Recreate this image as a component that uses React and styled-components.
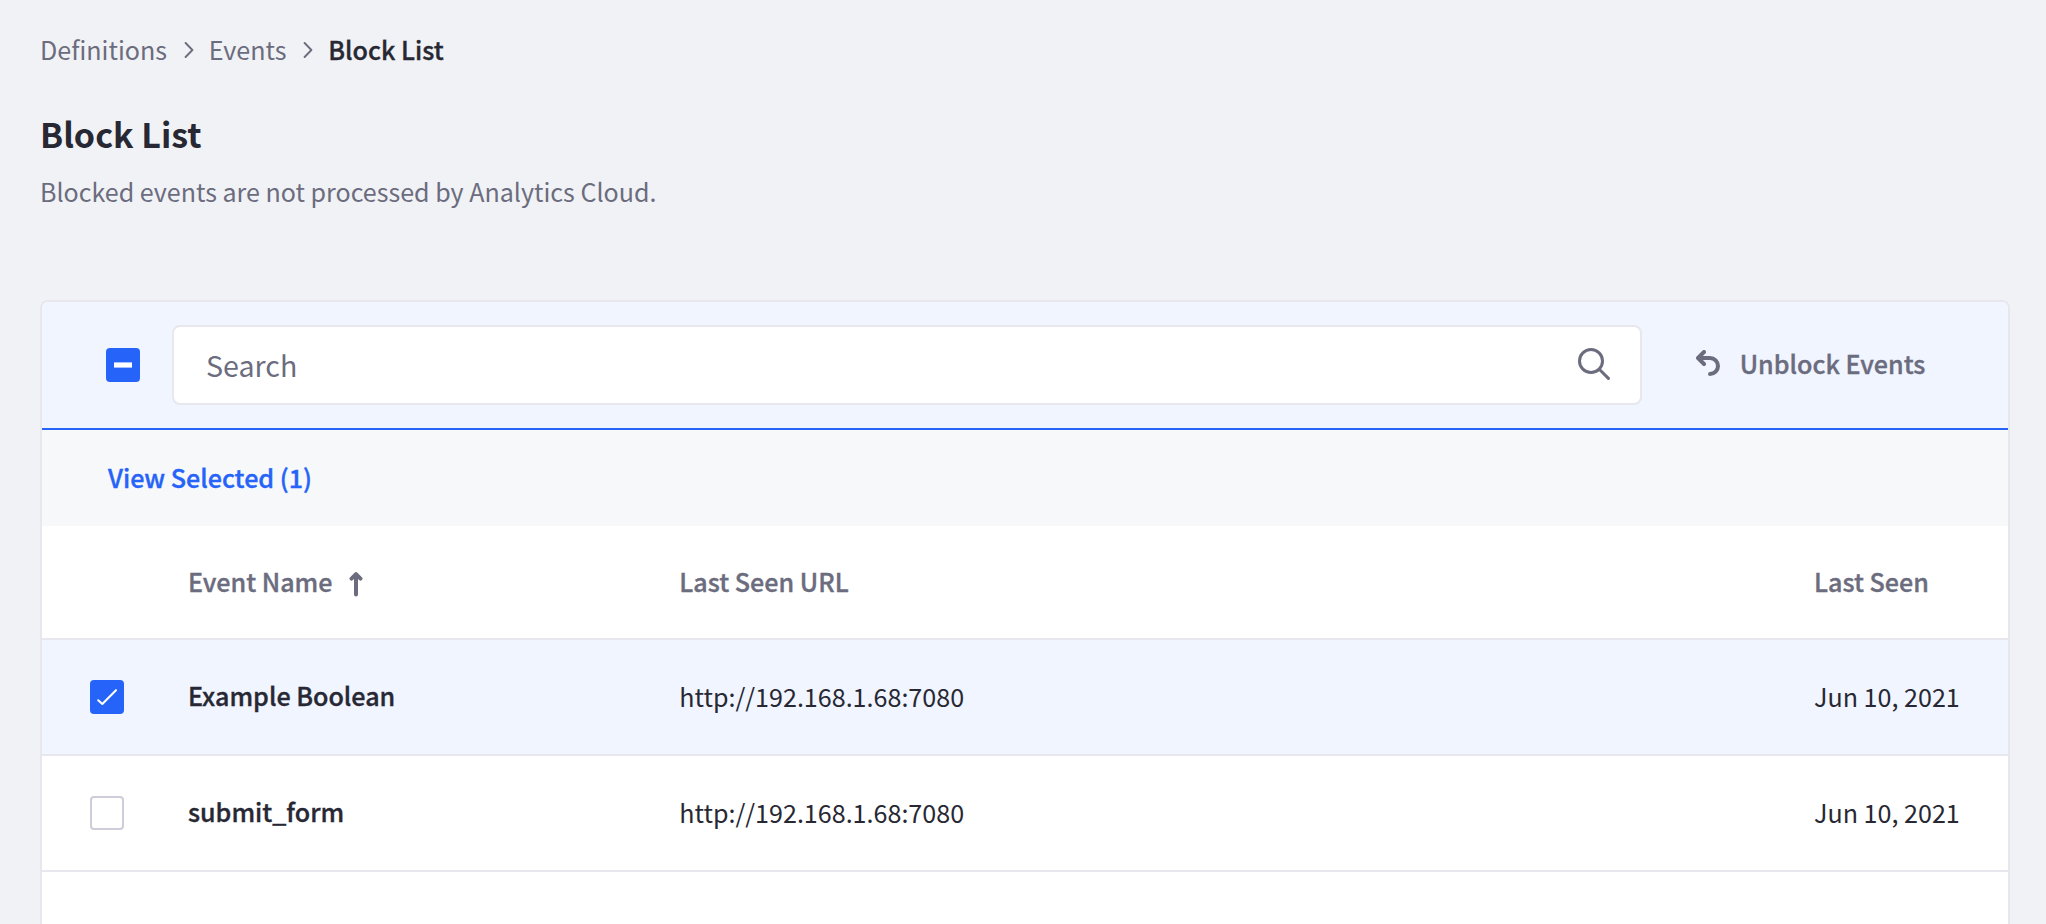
import React from "react";
import styled, { createGlobalStyle, css } from "styled-components";

const color = {
  page: "#f1f2f5",
  dark: "#272833",
  muted: "#6b6c7e",
  border: "#e7e7ed",
  blue: "#2563f9",
  selected: "#f0f5ff",
  strip: "#f7f8f9",
  box: "#cdced9",
};

const GlobalStyle = createGlobalStyle`
  *, *::before, *::after { box-sizing: border-box; }
  html, body { margin: 0; height: 100%; overflow: hidden; }
  body {
    background: ${color.page};
    color: ${color.dark};
    font-family: "Noto Sans CJK SC", "Noto Sans", sans-serif;
    font-size: 25.1px;
    line-height: 40px;
  }
  #root { height: 100%; }
  svg { display: block; flex: none; }
`;

const semibold = css`
  font-weight: 500;
  -webkit-text-stroke: 0.35px currentColor;
`;

const Page = styled.main`
  display: flex;
  flex-direction: column;
  height: 924px;
  padding: 29px 36px 0 40px;
  overflow: hidden;
`;

const Breadcrumb = styled.nav`
  display: flex;
  align-items: center;
  height: 40px;
  color: ${color.muted};
`;

const Crumb = styled.span`
  white-space: nowrap;
`;

const CurrentCrumb = styled(Crumb)`
  ${semibold}
  color: ${color.dark};
`;

const Separator = styled.svg`
  margin: 2px 14.8px 0 17px;
`;

const Title = styled.h1`
  margin: 40px 0 12px;
  font-size: 34px;
  font-weight: 700;
  line-height: 50px;
`;

const Description = styled.p`
  margin: 0 0 89px;
  color: ${color.muted};
  font-size: 25.05px;
`;

const Card = styled.section`
  display: flex;
  flex-direction: column;
  flex: 1;
  border: 2px solid ${color.border};
  border-bottom: 0;
  border-radius: 8px 8px 0 0;
  background: #fff;
  overflow: hidden;
`;

const Toolbar = styled.div`
  display: flex;
  align-items: center;
  height: 128px;
  padding-left: 64px;
  border-bottom: 2px solid ${color.blue};
  background: ${color.selected};
`;

const CheckBox = styled.span`
  display: grid;
  place-items: center;
  flex: none;
  width: 34px;
  height: 34px;
  border-radius: 4px;
  background: ${(p) => (p.$filled ? color.blue : "#fff")};
  border: ${(p) => (p.$filled ? "0" : `2px solid ${color.box}`)};
`;

const SearchField = styled.div`
  display: flex;
  align-items: center;
  justify-content: space-between;
  flex: 1;
  height: 80px;
  margin-left: 32px;
  padding: 0 30px 0 32px;
  border: 2px solid ${color.border};
  border-radius: 8px;
  background: #fff;
  color: ${color.muted};
  font-size: 28.6px;

  svg { margin-bottom: 2px; }
`;

const UnblockButton = styled.div`
  ${semibold}
  display: flex;
  align-items: center;
  gap: 19.7px;
  width: 366px;
  padding: 0 0 4px 54px;
  color: ${color.muted};
  white-space: nowrap;
`;

const SelectionStrip = styled.div`
  ${semibold}
  display: flex;
  align-items: center;
  height: 96px;
  padding: 0 0 2px 66px;
  background: ${color.strip};
  color: ${color.blue};
`;

const Row = styled.div`
  display: grid;
  grid-template-columns: 146px 491.3px 1fr 194px;
  align-items: center;
  height: ${(p) => (p.$header ? 114 : 116)}px;
  border-bottom: 2px solid ${color.border};
  background: ${(p) => (p.$selected ? color.selected : "#fff")};
`;

const SelectCell = styled.div`
  padding-left: 48px;
`;

const Cell = styled.div`
  padding-bottom: 2px;
  white-space: nowrap;
`;

const NameCell = styled(Cell)`
  ${semibold}
  padding-bottom: 4px;
`;

const HeadCell = styled(Cell)`
  ${semibold}
  display: flex;
  align-items: center;
  color: ${color.muted};

  svg { margin: 5px 0 0 17px; }
`;

const Chevron = () => (
  <Separator width="10" height="16" viewBox="0 0 10 16" fill="none" stroke={color.muted}
    strokeWidth="1.9" strokeLinecap="round" strokeLinejoin="round">
    <path d="M1.6 1L8.4 8L1.6 15" />
  </Separator>
);

const MinusIcon = () => (
  <svg width="34" height="34" viewBox="0 0 34 34">
    <rect x="8" y="14.4" width="18" height="5.2" fill="#fff" />
  </svg>
);

const CheckIcon = () => (
  <svg width="34" height="34" viewBox="0 0 34 34" fill="none" stroke="#fff"
    strokeWidth="2.1" strokeLinecap="round" strokeLinejoin="round">
    <path d="M8.2 20.3L12.3 24L26 10.2" />
  </svg>
);

const SearchIcon = () => (
  <svg width="32" height="32" viewBox="0 0 32 32" fill="none" stroke={color.muted}
    strokeWidth="3" strokeLinecap="round">
    <circle cx="13" cy="13" r="11.5" />
    <path d="M21.5 21.5L30.4 30.4" />
  </svg>
);

const UndoIcon = () => (
  <svg width="24" height="26" viewBox="0 0 24 26" fill="none" stroke={color.muted}
    strokeWidth="4" strokeLinecap="round" strokeLinejoin="round">
    <path d="M8 2L2 8L8 14" />
    <path d="M3 8H14A8 8 0 0 1 14 24" />
  </svg>
);

const SortUpIcon = () => (
  <svg width="14" height="26" viewBox="0 0 14 26" fill="none" stroke={color.muted}
    strokeWidth="4" strokeLinecap="round" strokeLinejoin="round">
    <path d="M2.5 7.6L7 3.2L11.5 7.6M7 4V23.4" />
  </svg>
);

const events = [
  { name: "Example Boolean", url: "http://192.168.1.68:7080", seen: "Jun 10, 2021", selected: true },
  { name: "submit_form", url: "http://192.168.1.68:7080", seen: "Jun 10, 2021", selected: false },
];

export default function App() {
  return (
    <>
      <GlobalStyle />
      <Page>
        <Breadcrumb>
          <Crumb>Definitions</Crumb>
          <Chevron />
          <Crumb>Events</Crumb>
          <Chevron />
          <CurrentCrumb>Block List</CurrentCrumb>
        </Breadcrumb>
        <Title>Block List</Title>
        <Description>Blocked events are not processed by Analytics Cloud.</Description>
        <Card>
          <Toolbar>
            <CheckBox $filled><MinusIcon /></CheckBox>
            <SearchField>
              <span>Search</span>
              <SearchIcon />
            </SearchField>
            <UnblockButton>
              <UndoIcon />
              <span>Unblock Events</span>
            </UnblockButton>
          </Toolbar>
          <SelectionStrip>View Selected (1)</SelectionStrip>
          <Row $header>
            <SelectCell />
            <HeadCell>Event Name<SortUpIcon /></HeadCell>
            <HeadCell>Last Seen URL</HeadCell>
            <HeadCell>Last Seen</HeadCell>
          </Row>
          {events.map((event) => (
            <Row key={event.name} $selected={event.selected}>
              <SelectCell>
                <CheckBox $filled={event.selected}>{event.selected && <CheckIcon />}</CheckBox>
              </SelectCell>
              <NameCell>{event.name}</NameCell>
              <Cell>{event.url}</Cell>
              <Cell>{event.seen}</Cell>
            </Row>
          ))}
        </Card>
      </Page>
    </>
  );
}
